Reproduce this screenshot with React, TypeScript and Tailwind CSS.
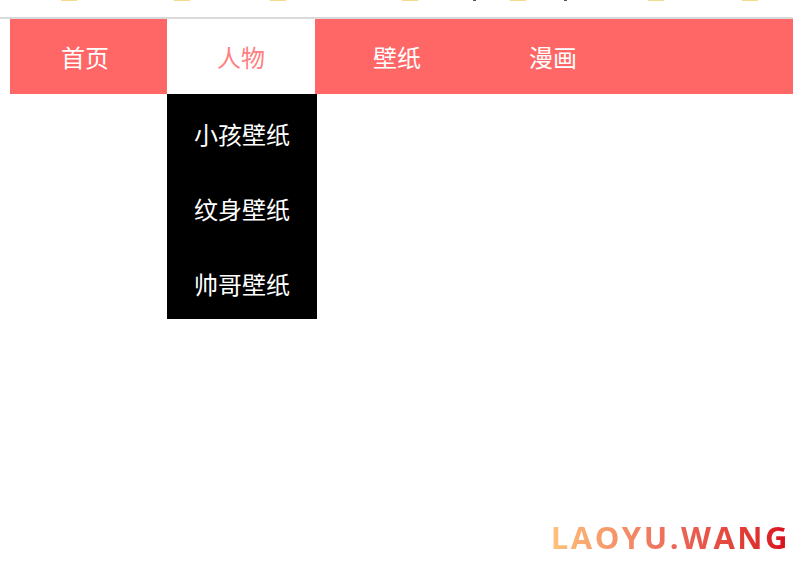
import React from 'react';

const navItems = ['首页', '人物', '壁纸', '漫画'];
const subItems = ['小孩壁纸', '纹身壁纸', '帅哥壁纸'];
const marks = [61, 174, 270, 402, 510, 648, 742];
const darkMarks = [473, 564];

export default function App() {
  return (
    <div
      className="relative w-[793px] h-[561px] overflow-hidden bg-white"
      style={{ fontFamily: '"Microsoft YaHei", "Noto Sans CJK SC", sans-serif' }}
    >
      {/* bookmark bar remnant */}
      <div className="relative h-[17px]">
        {marks.map((x) => (
          <span key={x} className="absolute top-0 h-[1px] w-[16px] bg-[#f5dc8c]" style={{ left: x }} />
        ))}
        {darkMarks.map((x) => (
          <span key={x} className="absolute top-0 h-[1px] w-[3px] bg-[#555]" style={{ left: x }} />
        ))}
      </div>
      <div className="h-[2px] bg-[#d9d9d9]" />

      <div className="pl-[10px]">
        <ul className="flex h-[75px] bg-[#ff6666] gap-[6px]">
          {navItems.map((item, i) => (
            <li key={item} className="relative w-[150px] shrink-0">
              <div
                className={`h-[75px] flex items-center justify-center text-[24px] ${
                  i === 1 ? 'bg-white text-[#ff8080] ml-[1px] w-[148px]' : 'text-white'
                }`}
              >
                {item}
              </div>
              {i === 1 && (
                <ul className="absolute left-[1px] top-[75px] w-[150px] bg-black z-10">
                  {subItems.map((s) => (
                    <li key={s} className="h-[75px] flex items-center justify-center pt-[5px] text-[24px] text-white">
                      {s}
                    </li>
                  ))}
                </ul>
              )}
            </li>
          ))}
        </ul>
      </div>

      <div
        className="absolute right-[3px] bottom-[1px] text-[31px] font-bold tracking-[2.5px] bg-gradient-to-r from-[#fdc27a] via-[#ec6a5a] to-[#d9001b] bg-clip-text text-transparent"
        style={{ fontFamily: '"Open Sans", "Noto Sans", sans-serif' }}
      >
        LAOYU.WANG
      </div>
    </div>
  );
}
